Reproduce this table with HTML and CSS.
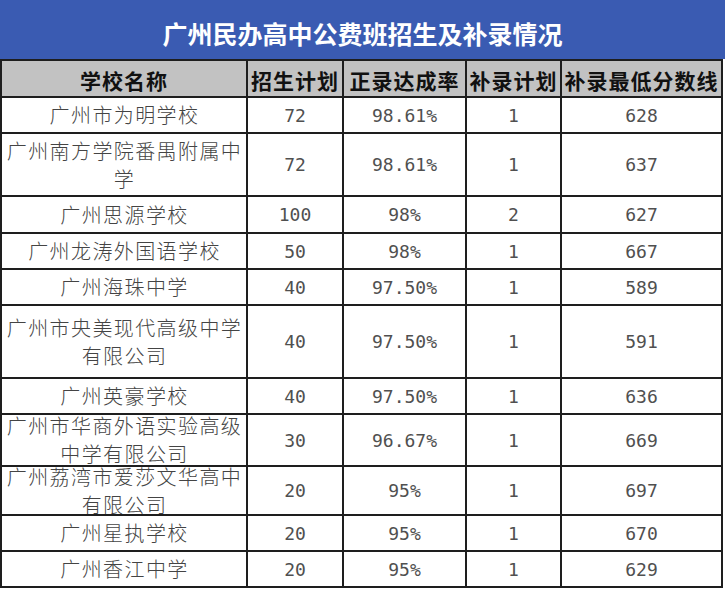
FILE: index.html
```html
<!DOCTYPE html>
<html lang="zh-CN">
<head>
<meta charset="utf-8">
<title>广州民办高中公费班招生及补录情况</title>
<link rel="stylesheet" href="styles.css">
</head>
<body>
<div class="sheet">
  <div class="title">广州民办高中公费班招生及补录情况</div>
  <div class="grid">
    <div class="hd">学校名称</div><div class="hd">招生计划</div><div class="hd">正录达成率</div><div class="hd">补录计划</div><div class="hd">补录最低分数线</div>

    <div class="name">广州市为明学校</div><div class="num">72</div><div class="num">98.61%</div><div class="num">1</div><div class="num">628</div>
    <div class="name">广州南方学院番禺附属中学</div><div class="num">72</div><div class="num">98.61%</div><div class="num">1</div><div class="num">637</div>
    <div class="name">广州思源学校</div><div class="num">100</div><div class="num">98%</div><div class="num">2</div><div class="num">627</div>
    <div class="name">广州龙涛外国语学校</div><div class="num">50</div><div class="num">98%</div><div class="num">1</div><div class="num">667</div>
    <div class="name">广州海珠中学</div><div class="num">40</div><div class="num">97.50%</div><div class="num">1</div><div class="num">589</div>
    <div class="name">广州市央美现代高级中学有限公司</div><div class="num">40</div><div class="num">97.50%</div><div class="num">1</div><div class="num">591</div>
    <div class="name">广州英豪学校</div><div class="num">40</div><div class="num">97.50%</div><div class="num">1</div><div class="num">636</div>
    <div class="name">广州市华商外语实验高级中学有限公司</div><div class="num">30</div><div class="num">96.67%</div><div class="num">1</div><div class="num">669</div>
    <div class="name">广州荔湾市爱莎文华高中有限公司</div><div class="num">20</div><div class="num">95%</div><div class="num">1</div><div class="num">697</div>
    <div class="name">广州星执学校</div><div class="num">20</div><div class="num">95%</div><div class="num">1</div><div class="num">670</div>
    <div class="name">广州香江中学</div><div class="num">20</div><div class="num">95%</div><div class="num">1</div><div class="num">629</div>
  </div>
</div>
</body>
</html>
```

FILE: styles.css
```css
html, body {
  margin: 0;
  padding: 0;
  background: #ffffff;
}

.sheet {
  width: 725px;
}

.title {
  width: 725px;
  height: 59px;
  box-sizing: border-box;
  padding-top: 6px;
  background: #3a5bb2;
  color: #ffffff;
  font-family: "Noto Sans CJK SC", sans-serif;
  font-weight: 700;
  font-size: 25px;
  letter-spacing: 0;
  display: flex;
  align-items: center;
  justify-content: center;
}

.grid {
  width: 723px;
  box-sizing: border-box;
  padding: 2px;
  background: #1e1e1e;
  display: grid;
  grid-template-columns: 244px 94px 121px 93px 159px;
  grid-template-rows: 35px 34px 61px 35px 34px 34px 71px 34px 50px 47px 34px 34px;
  gap: 2px;
}

.grid > div {
  display: flex;
  align-items: center;
  justify-content: center;
  text-align: center;
  overflow: hidden;
  background: #ffffff;
}

.hd {
  background: #c2c2c2 !important;
  color: #111111;
  font-family: "Noto Sans CJK SC", sans-serif;
  font-weight: 700;
  font-size: 21px;
  letter-spacing: 1px;
  white-space: nowrap;
  padding-top: 2px;
}

.name {
  color: #444444;
  font-family: "Noto Sans CJK SC", sans-serif;
  font-weight: 300;
  font-size: 20px;
  letter-spacing: 1.4px;
  line-height: 28px;
  padding-left: 1px;
}

.num {
  color: #505050;
  font-family: "DejaVu Sans Mono", monospace;
  font-size: 18px;
}
```
